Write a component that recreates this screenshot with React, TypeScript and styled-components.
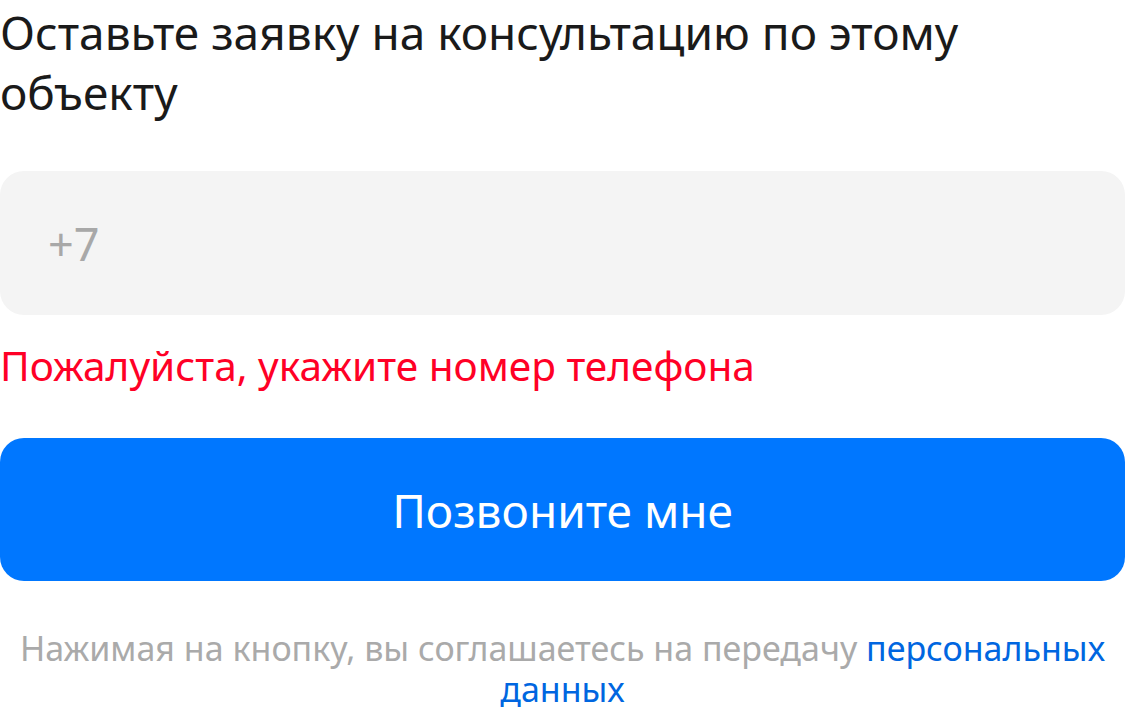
import styled, { createGlobalStyle } from "styled-components";

const GlobalStyle = createGlobalStyle`
  body {
    margin: 0;
    background: #ffffff;
    font-family: "Noto Sans", "Open Sans", sans-serif;
  }
`;

const Form = styled.form`
  width: 1125px;
  display: flex;
  flex-direction: column;
`;

const Title = styled.h2`
  margin: 0;
  padding-top: 2px;
  font-size: 46px;
  line-height: 60px;
  font-weight: 400;
  color: #1a1a1a;
`;

const PhoneInput = styled.input`
  margin-top: 49px;
  height: 144px;
  box-sizing: border-box;
  border: none;
  border-radius: 24px;
  background: #f4f4f4;
  padding: 0 48px;
  font-family: inherit;
  font-size: 45px;
  color: #1a1a1a;
  outline: none;
  &::placeholder {
    color: #a8a8a8;
  }
`;

const ErrorText = styled.div`
  margin-top: 25px;
  font-size: 40.6px;
  line-height: 52px;
  color: #ff0026;
`;

const SubmitButton = styled.button`
  margin-top: 46px;
  height: 143px;
  border: none;
  border-radius: 24px;
  background: #0077ff;
  color: #ffffff;
  font-family: inherit;
  font-size: 46px;
  cursor: pointer;
`;

const Agreement = styled.p`
  margin: 47px 0 0;
  text-align: center;
  font-size: 34px;
  line-height: 41px;
  color: #aaaaaa;
  a {
    color: #0066e0;
    text-decoration: none;
  }
`;

export default function App() {
  return (
    <>
      <GlobalStyle />
      <Form onSubmit={(e) => e.preventDefault()}>
        <Title>Оставьте заявку на консультацию по этому объекту</Title>
        <PhoneInput type="tel" placeholder="+7" />
        <ErrorText>Пожалуйста, укажите номер телефона</ErrorText>
        <SubmitButton type="submit">Позвоните мне</SubmitButton>
        <Agreement>
          Нажимая на кнопку, вы соглашаетесь на передачу{" "}
          <a href="#">персональных данных</a>
        </Agreement>
      </Form>
    </>
  );
}
